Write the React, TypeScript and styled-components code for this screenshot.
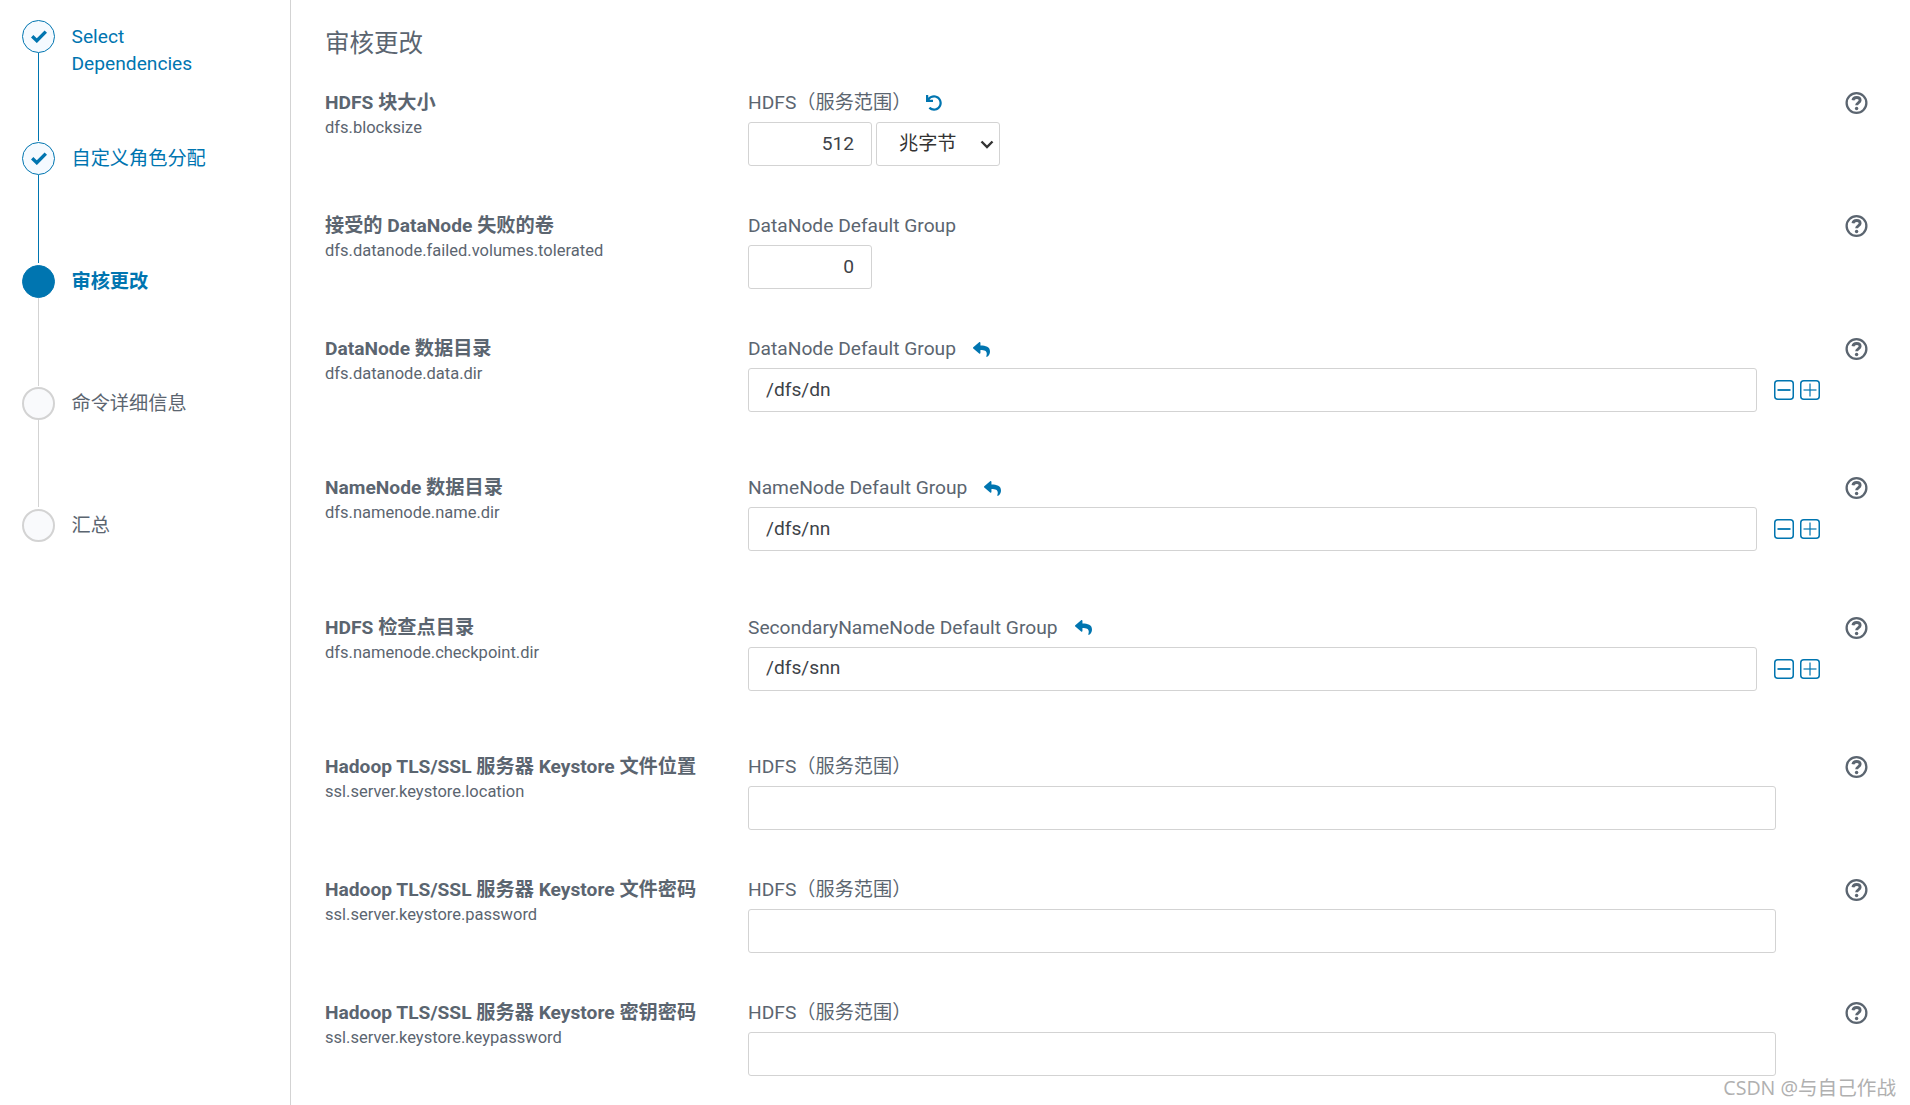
import React from "react";
import styled, { createGlobalStyle } from "styled-components";
import { FaReply, FaUndo } from "react-icons/fa";

const BLUE = "#0075b0";
const GREY = "#5b6570";
const LINE = "#d3d3d3";

const GlobalStyle = createGlobalStyle`
  html, body {
    margin: 0;
    padding: 0;
    background: #fff;
    overflow: hidden;
    font-family: Roboto, "Noto Sans CJK SC", sans-serif;
    color: ${GREY};
  }
`;

const Page = styled.div`
  display: flex;
  position: relative;
  height: 1105px;
  overflow: hidden;
`;

const Sidebar = styled.nav`
  flex: 0 0 291px;
  box-sizing: border-box;
  padding: 20px 0 0 22px;
  border-right: 1px solid ${LINE};
`;

const Step = styled.div<{ $state: string }>`
  display: flex;
  gap: 16.5px;
  height: 122.3px;
  font-size: 19.2px;
  line-height: 27px;
  color: ${({ $state }) => ($state === "pending" ? GREY : BLUE)};
  font-weight: ${({ $state }) => ($state === "active" ? 700 : 400)};
`;

const StepLabel = styled.div`
  padding-top: 3px;
  width: 150px;
`;

const Dot = styled.div<{ $state: string; $last?: boolean; $lineDone?: boolean }>`
  position: relative;
  flex: 0 0 33px;
  box-sizing: border-box;
  height: 33px;
  border-radius: 50%;
  display: flex;
  align-items: center;
  justify-content: center;
  color: ${BLUE};
  background: ${({ $state }) => ($state === "done" ? "#f5faff" : $state === "active" ? BLUE : "#f9fafc")};
  border: ${({ $state }) => ($state === "pending" ? `2.5px solid ${LINE}` : `1.5px solid ${BLUE}`)};

  &::after {
    content: "";
    display: ${({ $last }) => ($last ? "none" : "block")};
    position: absolute;
    left: 50%;
    margin-left: -1px;
    top: calc(100% + 1px);
    width: 1.5px;
    height: 88px;
    background: ${({ $lineDone }) => ($lineDone ? BLUE : LINE)};
  }
`;

const Main = styled.main`
  flex: 1;
  padding: 0 0 0 34px;
`;

const Title = styled.h3`
  margin: 0;
  height: 91px;
  padding-top: 28px;
  box-sizing: border-box;
  font-size: 24.5px;
  line-height: 32px;
  font-weight: 400;
`;

const Row = styled.section<{ $multi?: boolean }>`
  display: grid;
  grid-template-columns: 423px 1096px 24px;
  padding-bottom: ${({ $multi }) => ($multi ? "64.3px" : "48px")};
`;

const Name = styled.div`
  font-size: 19.2px;
  line-height: 24px;
  font-weight: 700;
`;

const Key = styled.div`
  margin-top: 1px;
  font-size: 16.5px;
  line-height: 24px;
`;

const Scope = styled.div`
  display: flex;
  align-items: center;
  gap: 17px;
  height: 24px;
  margin-bottom: 7px;
  font-size: 19.2px;
  line-height: 24px;
`;

const ScopeIcon = styled.span<{ $undo?: boolean }>`
  display: inline-flex;
  margin-left: ${({ $undo }) => ($undo ? "-2px" : "0")};
  color: ${BLUE};
  font-size: ${({ $undo }) => ($undo ? "16px" : "17px")};
`;

const Controls = styled.div`
  display: flex;
  align-items: center;
  gap: 4px;
`;

const Field = styled.input<{ $size: string }>`
  box-sizing: border-box;
  height: 44px;
  padding: 0 17px 2px;
  border: 1px solid ${LINE};
  border-radius: 3px;
  background: #fff;
  outline: none;
  font: 400 19.2px Roboto, "Noto Sans CJK SC", sans-serif;
  color: #3d4248;
  text-align: ${({ $size }) => ($size === "number" ? "right" : "left")};
  width: ${({ $size }) => ($size === "number" ? "124px" : $size === "list" ? "1009px" : "1028px")};
`;

const SelectWrap = styled.div`
  position: relative;
  display: flex;
  width: 124px;
  height: 44px;
  color: #333;
`;

const UnitSelect = styled.select`
  appearance: none;
  box-sizing: border-box;
  width: 100%;
  height: 100%;
  padding: 0 17px 2px 22px;
  border: 1px solid ${LINE};
  border-radius: 3px;
  background: #fff;
  outline: none;
  font: 400 19.2px Roboto, "Noto Sans CJK SC", sans-serif;
  color: #333;
`;

const Chevron = styled.svg`
  position: absolute;
  right: 6px;
  top: 18px;
  pointer-events: none;
`;

const ListButtons = styled.div`
  display: flex;
  gap: 5.5px;
  margin-left: 13px;
  color: ${BLUE};
`;

const Help = styled.div`
  display: flex;
  align-items: center;
  justify-content: center;
  height: 24px;
  padding-left: 1px;
  color: ${GREY};
`;

const Watermark = styled.div`
  position: absolute;
  right: 14px;
  bottom: 5px;
  font: 400 19.6px "Open Sans", "Noto Sans CJK SC", sans-serif;
  line-height: 24px;
  color: #b0b0b0;
`;

const SquareIcon = ({ plus = false }: { plus?: boolean }) => (
  <svg width="20" height="20" viewBox="0 0 20 20" fill="none" stroke="currentColor">
    <rect x="0.75" y="0.75" width="18.5" height="18.5" rx="3" strokeWidth="1.5" />
    <path d="M3.5 10h13" strokeWidth={plus ? 1.2 : 1.8} />
    {plus && <path d="M10 3.5v13" strokeWidth="1.2" />}
  </svg>
);

const CheckIcon = () => (
  <svg width="16" height="13" viewBox="0 0 16 13" fill="none" stroke="currentColor" strokeWidth="3.4">
    <path d="M1.2 6.3l4.6 4.4L14.8 1.6" />
  </svg>
);

const HelpIcon = () => (
  <svg width="24" height="24" viewBox="0 0 24 24" fill="none" stroke="currentColor">
    <circle cx="12" cy="12" r="10.3" strokeWidth="2.4" />
    <path d="M8.3 9.2c.3-2 1.8-3 3.8-3 2.1 0 3.7 1.2 3.7 3 0 2.7-3.7 2.6-3.7 5.1" strokeWidth="3" />
    <circle cx="12.1" cy="17.8" r="1.8" fill="currentColor" stroke="none" />
  </svg>
);

const steps = [
  { label: "Select Dependencies", state: "done", lineDone: true },
  { label: "自定义角色分配", state: "done", lineDone: true },
  { label: "审核更改", state: "active", lineDone: false },
  { label: "命令详细信息", state: "pending", lineDone: false },
  { label: "汇总", state: "pending", lineDone: false },
];

type Setting = {
  name: string;
  prop: string;
  scope: string;
  icon?: "undo" | "reply";
  kind: "size" | "number" | "list" | "text";
  value?: string;
};

const settings: Setting[] = [
  { name: "HDFS 块大小", prop: "dfs.blocksize", scope: "HDFS（服务范围）", icon: "undo", kind: "size", value: "512" },
  { name: "接受的 DataNode 失败的卷", prop: "dfs.datanode.failed.volumes.tolerated", scope: "DataNode Default Group", kind: "number", value: "0" },
  { name: "DataNode 数据目录", prop: "dfs.datanode.data.dir", scope: "DataNode Default Group", icon: "reply", kind: "list", value: "/dfs/dn" },
  { name: "NameNode 数据目录", prop: "dfs.namenode.name.dir", scope: "NameNode Default Group", icon: "reply", kind: "list", value: "/dfs/nn" },
  { name: "HDFS 检查点目录", prop: "dfs.namenode.checkpoint.dir", scope: "SecondaryNameNode Default Group", icon: "reply", kind: "list", value: "/dfs/snn" },
  { name: "Hadoop TLS/SSL 服务器 Keystore 文件位置", prop: "ssl.server.keystore.location", scope: "HDFS（服务范围）", kind: "text" },
  { name: "Hadoop TLS/SSL 服务器 Keystore 文件密码", prop: "ssl.server.keystore.password", scope: "HDFS（服务范围）", kind: "text" },
  { name: "Hadoop TLS/SSL 服务器 Keystore 密钥密码", prop: "ssl.server.keystore.keypassword", scope: "HDFS（服务范围）", kind: "text" },
];

const App = () => {
  const renderControl = (s: Setting) => {
    switch (s.kind) {
      case "size":
        return (
          <Controls>
            <Field $size="number" value={s.value} readOnly />
            <SelectWrap>
              <UnitSelect defaultValue="mb">
                <option value="mb">兆字节</option>
              </UnitSelect>
              <Chevron width="14" height="9" viewBox="0 0 14 9" fill="none" stroke="currentColor" strokeWidth="2.4">
                <path d="M1.5 1.5L7 7l5.5-5.5" />
              </Chevron>
            </SelectWrap>
          </Controls>
        );
      case "number":
        return <Field $size="number" value={s.value} readOnly />;
      case "list":
        return (
          <Controls>
            <Field $size="list" value={s.value} readOnly />
            <ListButtons>
              <SquareIcon />
              <SquareIcon plus />
            </ListButtons>
          </Controls>
        );
      default:
        return <Field $size="text" value="" readOnly />;
    }
  };

  return (
    <Page>
      <GlobalStyle />
      <Sidebar>
        {steps.map((step, i) => (
          <Step key={step.label} $state={step.state}>
            <Dot $state={step.state} $last={i === steps.length - 1} $lineDone={step.lineDone}>
              {step.state === "done" && <CheckIcon />}
            </Dot>
            <StepLabel>{step.label}</StepLabel>
          </Step>
        ))}
      </Sidebar>
      <Main>
        <Title>审核更改</Title>
        {settings.map((s) => (
          <Row key={s.prop} $multi={s.kind === "list"}>
            <div>
              <Name>{s.name}</Name>
              <Key>{s.prop}</Key>
            </div>
            <div>
              <Scope>
                {s.scope}
                {s.icon && (
                  <ScopeIcon $undo={s.icon === "undo"}>{s.icon === "undo" ? <FaUndo /> : <FaReply />}</ScopeIcon>
                )}
              </Scope>
              {renderControl(s)}
            </div>
            <Help>
              <HelpIcon />
            </Help>
          </Row>
        ))}
      </Main>
      <Watermark>CSDN @与自己作战</Watermark>
    </Page>
  );
};

export default App;
